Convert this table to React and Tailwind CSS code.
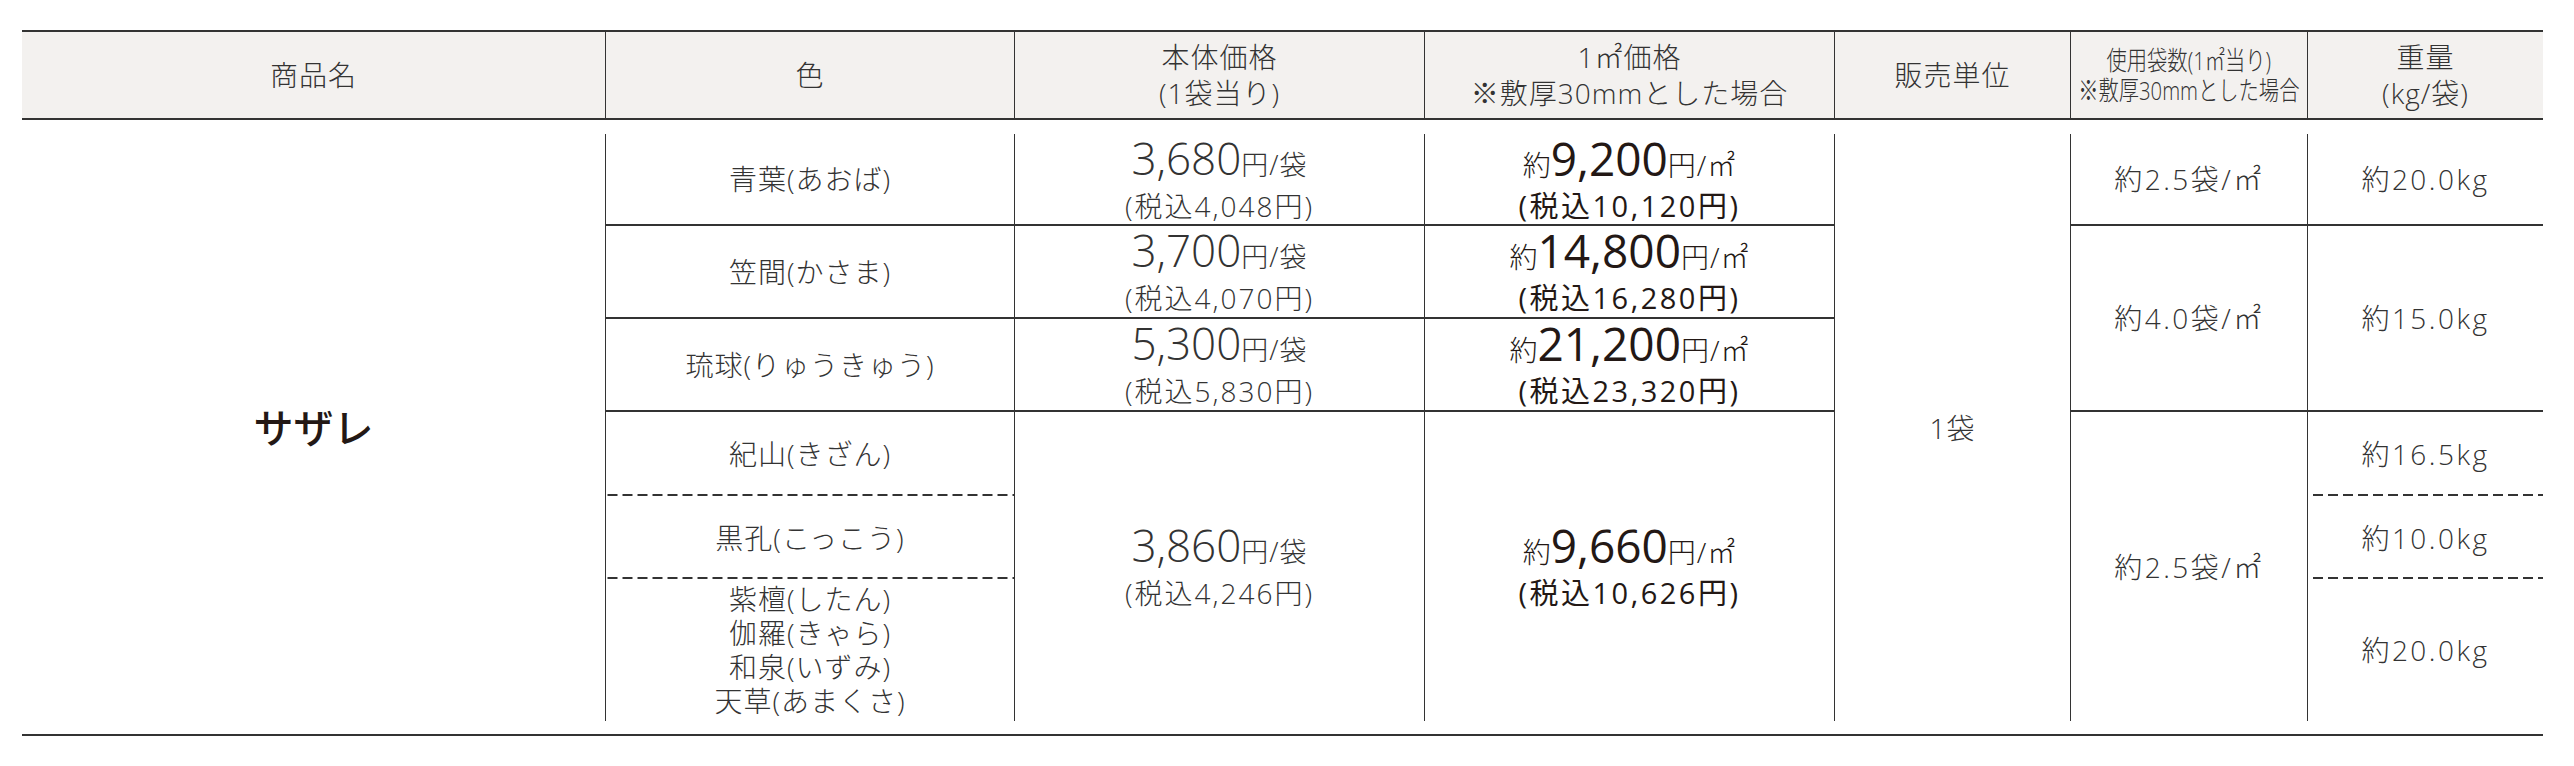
import React from "react";

const font = "font-['Open_Sans','Noto_Sans_CJK_JP',sans-serif]";

const Center = ({ className = "", children }) => (
  <div className={`flex flex-col items-center justify-center text-center ${className}`}>{children}</div>
);

const Price = ({ value, tax }) => (
  <>
    <div className="leading-[46px]">
      <span className="text-[44px] font-light">{value}</span>
      <span className="text-[27px] tracking-[1px]">円/袋</span>
    </div>
    <div className="text-[28px] font-light leading-[36px] tracking-[2px]">(税込{tax}円)</div>
  </>
);

const AreaPrice = ({ value, tax }) => (
  <>
    <div className="leading-[46px] text-[#231815]">
      <span className="text-[28px]">約</span>
      <span className="text-[46px] font-normal">{value}</span>
      <span className="text-[28px] tracking-[1px]">円/㎡</span>
    </div>
    <div className="text-[29px] font-normal leading-[36px] tracking-[2.5px] text-[#231815]">(税込{tax}円)</div>
  </>
);

export default function App() {
  const solid = "border-b-2 border-b-[#333]";
  const dashed =
    "bg-[image:linear-gradient(to_right,#333_10px,transparent_10px)] bg-[length:15px_2px] bg-repeat-x bg-bottom";
  const left = "border-l border-l-[#333]";
  const num = "tracking-[2.5px]";

  return (
    <div className={`bg-white pt-[30px] pl-[22px] pb-[28px] font-light text-[#333] ${font}`}>
      <div className="w-[2521px]">
        {/* header */}
        <div className="grid h-[90px] grid-cols-[583px_409px_410px_410px_236px_237px_236px] border-y-2 border-[#333] bg-[#f3f1ef] text-[28px] leading-[36px] tracking-[1px]">
          <Center>商品名</Center>
          <Center className={left}>色</Center>
          <Center className={left}>
            <div>本体価格</div>
            <div>(1袋当り)</div>
          </Center>
          <Center className={left}>
            <div>1㎡価格</div>
            <div>※敷厚30mmとした場合</div>
          </Center>
          <Center className={left}>販売単位</Center>
          <Center className={left}>
            <div className="scale-x-[0.78] whitespace-nowrap text-[26px] leading-[30px] tracking-normal">
              <div>使用袋数(1㎡当り)</div>
              <div>※敷厚30mmとした場合</div>
            </div>
          </Center>
          <Center className={left}>
            <div>重量</div>
            <div>(kg/袋)</div>
          </Center>
        </div>

        {/* body */}
        <div className="mt-[14px] grid grid-cols-[583px_409px_410px_410px_236px_237px_236px] grid-rows-[92px_93px_93px_84px_83px_142px] text-[28px] leading-[34px] tracking-[1px]">
          <Center className="col-start-1 row-span-6 row-start-1 text-[40px] font-medium tracking-normal text-[#231815]">サザレ</Center>

          <Center className={`col-start-2 row-start-1 ${left} ${solid}`}>青葉(あおば)</Center>
          <Center className={`col-start-2 row-start-2 ${left} ${solid}`}>笠間(かさま)</Center>
          <Center className={`col-start-2 row-start-3 ${left} ${solid}`}>琉球(りゅうきゅう)</Center>
          <Center className={`col-start-2 row-start-4 ${left} ${dashed}`}>紀山(きざん)</Center>
          <Center className={`col-start-2 row-start-5 ${left} ${dashed}`}>黒孔(こっこう)</Center>
          <Center className={`col-start-2 row-start-6 ${left}`}>
            <div>紫檀(したん)</div>
            <div>伽羅(きゃら)</div>
            <div>和泉(いずみ)</div>
            <div>天草(あまくさ)</div>
          </Center>

          <Center className={`col-start-3 row-start-1 ${left} ${solid} tracking-normal`}>
            <Price value="3,680" tax="4,048" />
          </Center>
          <Center className={`col-start-3 row-start-2 ${left} ${solid} tracking-normal`}>
            <Price value="3,700" tax="4,070" />
          </Center>
          <Center className={`col-start-3 row-start-3 ${left} ${solid} tracking-normal`}>
            <Price value="5,300" tax="5,830" />
          </Center>
          <Center className={`col-start-3 row-span-3 row-start-4 ${left} tracking-normal`}>
            <Price value="3,860" tax="4,246" />
          </Center>

          <Center className={`col-start-4 row-start-1 ${left} ${solid} tracking-normal`}>
            <AreaPrice value="9,200" tax="10,120" />
          </Center>
          <Center className={`col-start-4 row-start-2 ${left} ${solid} tracking-normal`}>
            <AreaPrice value="14,800" tax="16,280" />
          </Center>
          <Center className={`col-start-4 row-start-3 ${left} ${solid} tracking-normal`}>
            <AreaPrice value="21,200" tax="23,320" />
          </Center>
          <Center className={`col-start-4 row-span-3 row-start-4 ${left} tracking-normal`}>
            <AreaPrice value="9,660" tax="10,626" />
          </Center>

          <Center className={`col-start-5 row-span-6 row-start-1 ${left}`}>1袋</Center>

          <Center className={`col-start-6 row-start-1 ${left} ${solid} ${num}`}>約2.5袋/㎡</Center>
          <Center className={`col-start-6 row-span-2 row-start-2 ${left} ${solid} ${num}`}>約4.0袋/㎡</Center>
          <Center className={`col-start-6 row-span-3 row-start-4 ${left} ${num}`}>約2.5袋/㎡</Center>

          <Center className={`col-start-7 row-start-1 ${left} ${solid} ${num}`}>約20.0kg</Center>
          <Center className={`col-start-7 row-span-2 row-start-2 ${left} ${solid} ${num}`}>約15.0kg</Center>
          <Center className={`col-start-7 row-start-4 ${left} ${dashed} ${num}`}>約16.5kg</Center>
          <Center className={`col-start-7 row-start-5 ${left} ${dashed} ${num}`}>約10.0kg</Center>
          <Center className={`col-start-7 row-start-6 ${left} ${num}`}>約20.0kg</Center>
        </div>

        <div className="mt-[13px] h-[2px] bg-[#333]" />
      </div>
    </div>
  );
}
